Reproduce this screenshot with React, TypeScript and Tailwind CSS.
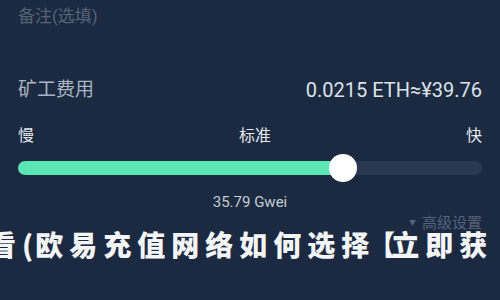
import React from "react";

export default function App() {
  return (
    <div
      className="relative w-[500px] h-[300px] overflow-hidden bg-[#1b2a41] px-[18px]"
      style={{ fontFamily: 'Roboto, "Noto Sans CJK SC", sans-serif' }}
    >
      <div className="pt-[4px] text-[17px] leading-[24px] text-[#566278]">备注(选填)</div>

      <div className="mt-[48px] flex h-[28px] items-center justify-between">
        <span className="text-[19px] text-[#aab3c2]">矿工费用</span>
        <span className="text-[20px] text-[#dde2e9]">0.0215 ETH≈¥39.76</span>
      </div>

      <div className="mt-[22px] flex h-[20px] items-center justify-between text-[16px] text-[#e4e8ee]">
        <span>慢</span>
        <span className="pl-[10px]">标准</span>
        <span>快</span>
      </div>

      <div className="relative mt-[9px] flex h-[26px] items-center">
        <div className="h-[14px] w-full rounded-full bg-[#2a3851]">
          <div className="h-[14px] w-[325px] rounded-full bg-[#5ce6b4]" />
        </div>
        <div className="absolute left-[311px] top-[-1px] h-[28px] w-[28px] rounded-full bg-white" />
      </div>

      <div className="mt-[12px] flex h-[18px] items-center justify-center text-[15px] text-[#c5ccd6]">
        35.79 Gwei
      </div>

      <div className="mt-[4px] flex h-[16px] items-center justify-end gap-[6px] text-[15px] text-[#56627a]">
        <span className="text-[7px]">▼</span>
        <span>高级设置</span>
      </div>

      <div
        className="absolute left-[-12px] top-[230px] whitespace-nowrap text-[28px] font-black leading-none tracking-[6px] text-[#f4f5f7]"
        style={{ fontFamily: '"Noto Sans CJK SC", sans-serif' }}
      >
        看<span className="tracking-[0px] mr-[2px]">(</span>欧易充值网络如何选择<span className="tracking-[0px] ml-[-8px] mr-[-4px]">【</span>立即获
      </div>
    </div>
  );
}
